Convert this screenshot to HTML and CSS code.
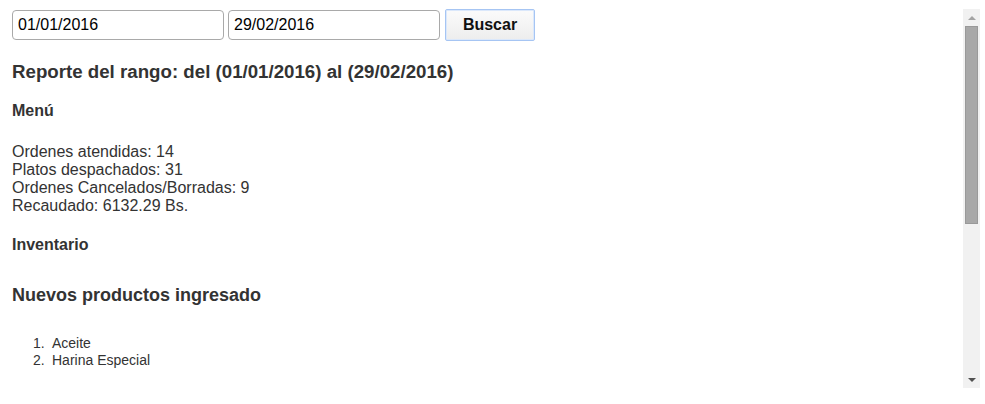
FILE: index.html
```html
<!DOCTYPE html>
<html lang="es">
<head>
<meta charset="utf-8">
<title>Reporte</title>
<link rel="stylesheet" href="styles.css">
</head>
<body>
<div class="frame">
  <div class="content">
    <form class="search">
      <input class="date" type="text" value="01/01/2016">
      <input class="date" type="text" value="29/02/2016">
      <button class="btn" type="button">Buscar</button>
    </form>
    <h3 class="title">Reporte del rango: del (01/01/2016) al (29/02/2016)</h3>
    <h5 class="section">Menú</h5>
    <p class="stats">Ordenes atendidas: 14<br>Platos despachados: 31<br>Ordenes Cancelados/Borradas: 9<br>Recaudado: 6132.29 Bs.</p>
    <h5 class="section">Inventario</h5>
    <h3 class="subtitle">Nuevos productos ingresado</h3>
    <ol class="items">
      <li>Aceite</li>
      <li>Harina Especial</li>
    </ol>
  </div>
  <div class="scrollbar">
    <div class="arrow up"></div>
    <div class="track"><div class="thumb"></div></div>
    <div class="arrow down"></div>
  </div>
</div>
</body>
</html>
```
FILE: styles.css
```css
html, body {
  margin: 0;
  padding: 0;
  background: #fff;
}
body {
  font-family: "Liberation Sans", Arial, sans-serif;
  color: #333;
  width: 985px;
  height: 404px;
  overflow: hidden;
}
.frame {
  display: flex;
  margin: 9px 5px 0 0;
  height: 379px;
}
.content {
  flex: 1;
  padding-left: 12px;
}
.search {
  display: flex;
  align-items: flex-start;
  margin: 0;
}
.date {
  box-sizing: border-box;
  width: 212px;
  height: 30px;
  margin: 1px 4px 0 0;
  padding: 0 5px;
  border: 1px solid #a9a9a9;
  border-radius: 4px;
  font-family: "Liberation Sans", Arial, sans-serif;
  font-size: 16px;
  color: #000;
  background: #fff;
  outline: none;
}
.btn {
  box-sizing: border-box;
  width: 90px;
  height: 32px;
  margin: 0 0 0 1px;
  border: 1px solid #a6c5f3;
  box-shadow: inset 0 0 0 1px #dbe8fb;
  border-radius: 2px;
  background: linear-gradient(#fbfbfb, #ededed);
  font-family: "Liberation Sans", Arial, sans-serif;
  font-weight: bold;
  font-size: 16px;
  color: #111;
}
.title {
  margin: 20px 0 0 0;
  font-size: 18.7px;
  line-height: 22px;
  font-weight: bold;
}
.section {
  margin: 19px 0 0 0;
  font-size: 16px;
  line-height: 18px;
  font-weight: bold;
}
.stats {
  margin: 23px 0 0 0;
  font-size: 16px;
  line-height: 18px;
}
.stats + .section {
  margin-top: 21px;
}
.subtitle {
  margin: 30px 0 0 0;
  font-size: 18px;
  line-height: 22px;
  font-weight: bold;
}
.items {
  list-style: none;
  counter-reset: item;
  margin: 29px 0 0 0;
  padding-left: 40px;
  font-size: 14px;
  line-height: 17px;
}
.items li {
  counter-increment: item;
  position: relative;
}
.items li::before {
  content: counter(item) ".";
  position: absolute;
  left: -19px;
}
.scrollbar {
  width: 17px;
  background: #f1f1f1;
  display: flex;
  flex-direction: column;
  align-items: center;
}
.arrow {
  width: 0;
  height: 0;
  border-left: 4px solid transparent;
  border-right: 4px solid transparent;
}
.arrow.up {
  margin-top: 7px;
  border-bottom: 4px solid #a3a3a3;
}
.arrow.down {
  margin-bottom: 6px;
  border-top: 4px solid #505050;
}
.track {
  flex: 1;
  width: 100%;
  padding-top: 6px;
}
.thumb {
  box-sizing: border-box;
  margin: 0 2px;
  height: 198px;
  background: #a8a8a8;
  border: 1px solid #999;
}
```
